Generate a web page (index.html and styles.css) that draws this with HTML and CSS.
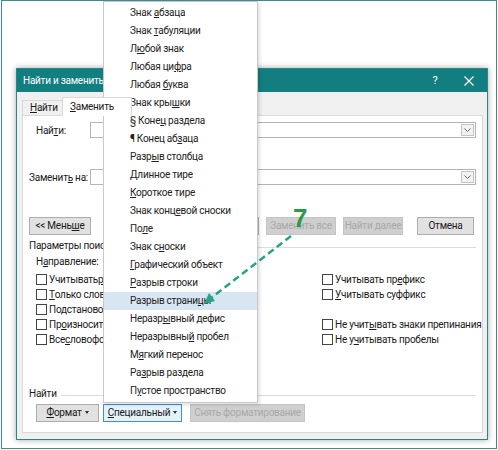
FILE: index.html
```html
<!DOCTYPE html>
<html lang="ru">
<head>
<meta charset="utf-8">
<title>Найти и заменить</title>
<link rel="stylesheet" href="styles.css">
</head>
<body>
<div class="screen">
  <div class="frame"></div>

  <div class="dialog">
    <div class="titlebar">
      <span class="title">Найти и заменить</span>
      <span class="help">?</span>
      <span class="close"><svg width="10" height="10" viewBox="0 0 10 10"><path d="M0.5 0.5 L9.5 9.5 M9.5 0.5 L0.5 9.5" stroke="#fff" stroke-width="1.2" fill="none"/></svg></span>
    </div>
    <div class="tabs">
      <div class="tab"><u>Н</u>айти</div>
      <div class="tab active"><u>З</u>аменить</div>
    </div>
    <div class="panel">
      <div class="field field-find">
        <span class="flabel">Най<u>т</u>и:</span>
        <div class="combo"><span class="drop"><svg width="7" height="4" viewBox="0 0 7 4"><path d="M0.5 0.5 L3.5 3.5 L6.5 0.5" stroke="#666" stroke-width="1" fill="none"/></svg></span></div>
      </div>
      <div class="field field-replace">
        <span class="flabel">Заменит<u>ь</u> на:</span>
        <div class="combo"><span class="drop"><svg width="7" height="4" viewBox="0 0 7 4"><path d="M0.5 0.5 L3.5 3.5 L6.5 0.5" stroke="#666" stroke-width="1" fill="none"/></svg></span></div>
      </div>
      <div class="btnrow">
        <button class="btn btn-less">&lt;&lt; Мень<u>ш</u>е</button>
        <div class="btngroup">
          <button class="btn btn-replace">Заменить</button>
          <button class="btn btn-dis btn-all">Заменить все</button>
          <button class="btn btn-dis btn-next">Найти далее</button>
          <button class="btn btn-cancel">Отмена</button>
        </div>
      </div>
      <div class="group"><span>Параметры поиска</span><span class="rule"></span></div>
      <div class="dir">Н<u>а</u>правление:</div>
      <div class="opts">
        <div class="col">
          <div class="opt"><span class="cb"></span>Учитывать <u>р</u>егистр</div>
          <div class="opt"><span class="cb"></span><u>Т</u>олько слово целиком</div>
          <div class="opt"><span class="cb"></span>Подстановочные знаки</div>
          <div class="opt"><span class="cb"></span>Пр<u>о</u>износится как</div>
          <div class="opt"><span class="cb"></span>Все <u>с</u>ловоформы</div>
        </div>
        <div class="col">
          <div class="opt"><span class="cb"></span>Учитывать пр<u>е</u>фикс</div>
          <div class="opt"><span class="cb"></span><u>У</u>читывать суффикс</div>
          <div class="opt"></div>
          <div class="opt"><span class="cb"></span>Не учит<u>ы</u>вать знаки препинания</div>
          <div class="opt"><span class="cb"></span>Не у<u>ч</u>итывать пробелы</div>
        </div>
      </div>
      <div class="group group-find"><span>Найти</span><span class="rule"></span></div>
      <div class="btnrow2">
        <button class="btn btn-format"><u>Ф</u>ормат<span class="tri"></span></button>
        <button class="btn btn-special"><u>С</u>пециальный<span class="tri"></span></button>
        <button class="btn btn-dis btn-clear">Снять форматирование</button>
      </div>
    </div>
  </div>

  <div class="menu">
    <div class="mi">Знак <u>а</u>бзаца</div>
    <div class="mi">Знак <u>т</u>абуляции</div>
    <div class="mi">Л<u>ю</u>бой знак</div>
    <div class="mi">Любая ци<u>ф</u>ра</div>
    <div class="mi">Любая <u>б</u>уква</div>
    <div class="mi">Знак кры<u>ш</u>ки</div>
    <div class="mi">§ Коне<u>ц</u> раздела</div>
    <div class="mi">¶ Конец аб<u>з</u>аца</div>
    <div class="mi">Разр<u>ы</u>в столбца</div>
    <div class="mi"><u>Д</u>линное тире</div>
    <div class="mi"><u>К</u>ороткое тире</div>
    <div class="mi">Знак конц<u>е</u>вой сноски</div>
    <div class="mi">По<u>л</u>е</div>
    <div class="mi">Знак с<u>н</u>оски</div>
    <div class="mi"><u>Г</u>рафический объект</div>
    <div class="mi"><u>Р</u>азрыв строки</div>
    <div class="mi mi-hl">Разрыв страни<u>ц</u>ы</div>
    <div class="mi">Неразр<u>ы</u>вный дефис</div>
    <div class="mi">Неразрывны<u>й</u> пробел</div>
    <div class="mi">М<u>я</u>гкий перенос</div>
    <div class="mi">Ра<u>з</u>рыв раздела</div>
    <div class="mi">П<u>у</u>стое пространство</div>
  </div>

  <div class="step">7</div>
  <svg class="arrow" width="498" height="450" viewBox="0 0 498 450">
    <line x1="291" y1="236" x2="211" y2="298" stroke="#27a386" stroke-width="2.5" stroke-dasharray="7 4"/>
    <polygon points="204,304 215,301 209,293" fill="#27a386"/>
  </svg>
</div>
</body>
</html>
```

FILE: styles.css
```css
* { box-sizing: border-box; }

body {
  margin: 0;
  font-family: Roboto, "Noto Sans", sans-serif;
  font-size: 10px;
  letter-spacing: -0.25px;
  color: #1a1a1a;
}

u { text-decoration: underline; text-underline-offset: 1px; text-decoration-thickness: 1px; }

.screen {
  position: relative;
  width: 498px;
  height: 450px;
  overflow: hidden;
  background: #fff;
  white-space: nowrap;
}

.frame {
  position: absolute;
  top: 0; left: 1px; right: 1px; bottom: 1px;
  border: 1px solid #3f8c8c;
  pointer-events: none;
}

/* dialog window */
.dialog {
  position: absolute;
  left: 16px;
  top: 68px;
  width: 472px;
  height: 372px;
  border: 1px solid #2b8787;
  background: #f0f0f0;
  box-shadow: 0 0 6px rgba(0, 0, 0, 0.35);
  display: flex;
  flex-direction: column;
}

.titlebar {
  height: 23px;
  flex: none;
  background: #137e80;
  color: #fff;
  display: flex;
  align-items: center;
  padding-left: 6px;
  font-size: 10px;
}
.title { flex: 1; }
.help { width: 32px; text-align: center; font-size: 11px; }
.close { width: 36px; display: flex; justify-content: center; align-items: center; }

.tabs {
  height: 23px;
  flex: none;
  display: flex;
  align-items: flex-end;
  padding-left: 5px;
}
.tab {
  height: 15px;
  width: 41px;
  padding-left: 7px;
  border: 1px solid #d9d9d9;
  border-bottom: none;
  background: #f0f0f0;
  line-height: 14px;
}
.tab.active {
  height: 19px;
  width: 70px;
  background: #fff;
  margin-bottom: -1px;
  margin-left: -1px;
  position: relative;
  z-index: 1;
  line-height: 18px;
}

.panel {
  flex: 1;
  margin: 0 4px 6px 5px;
  border: 1px solid #d9d9d9;
  background: #fff;
  display: flex;
  flex-direction: column;
  padding-right: 6px;
}

.field {
  display: grid;
  grid-template-columns: 67px 1fr;
  align-items: center;
  height: 16px;
}
.field-find { margin-top: 6px; }
.field-find .flabel { padding-left: 13px; }
.field-replace { margin-top: 31px; }
.field-replace .flabel { padding-left: 6px; }

.combo {
  height: 16px;
  border: 1px solid #b4b4b4;
  background: #fff;
  display: flex;
  justify-content: flex-end;
  align-items: center;
  padding-right: 1px;
}
.drop {
  width: 13px;
  height: 12px;
  border: 1px solid #c4c4c4;
  background: #f2f2f2;
  display: flex;
  align-items: center;
  justify-content: center;
}

.btn {
  font: inherit;
  letter-spacing: inherit;
  white-space: nowrap;
  height: 18px;
  padding: 0;
  border: 1px solid #adadad;
  background: #e1e1e1;
  color: #1a1a1a;
  text-align: center;
  line-height: 16px;
}
.btn-dis {
  background: #cfcfcf;
  border-color: #c4c4c4;
  color: #a9a9a9;
}

.btnrow {
  margin-top: 32px;
  display: flex;
  height: 18px;
}
.btn-less { margin-left: 6px; width: 62px; }
.btngroup { margin-left: auto; margin-right: 2px; display: flex; gap: 7px; }
.btn-replace { width: 69px; }
.btn-all { width: 70px; }
.btn-next { width: 60px; }
.btn-cancel { width: 57px; margin-left: 7px; }

.group {
  display: flex;
  align-items: center;
  height: 14px;
  margin-top: 3px;
  padding-left: 6px;
}
.group .rule {
  flex: 1;
  height: 1px;
  background: #dcdcdc;
  margin-left: 4px;
  margin-top: 4px;
}

.dir {
  height: 14px;
  line-height: 14px;
  margin-top: 3px;
  padding-left: 13px;
}

.opts {
  margin-top: 3px;
  display: grid;
  grid-template-columns: 286px 1fr;
  padding-left: 13px;
}
.opt {
  height: 15px;
  display: flex;
  align-items: center;
}
.cb {
  width: 11px;
  height: 11px;
  border: 1px solid #444;
  background: #fff;
  margin-right: 2px;
  flex: none;
}

.group-find { margin-top: 39px; }

.btnrow2 {
  margin-top: 4px;
  display: flex;
  padding-left: 13px;
}
.btn-format { width: 63px; }
.btn-special {
  width: 79px;
  margin-left: 4px;
  border-color: #3c8fd8;
  background: #e5f1fb;
}
.btn-clear { width: 115px; margin-left: 8px; }
.tri {
  display: inline-block;
  width: 0;
  height: 0;
  border-left: 2.5px solid transparent;
  border-right: 2.5px solid transparent;
  border-top: 3px solid #333;
  margin-left: 3px;
  vertical-align: 2px;
}

/* dropdown menu */
.menu {
  position: absolute;
  left: 103px;
  top: 1px;
  width: 155px;
  padding: 2px 0;
  background: #fff;
  border: 1px solid #c8c8c8;
  box-shadow: 2px 2px 3px rgba(0, 0, 0, 0.12);
}
.mi {
  height: 18px;
  line-height: 18px;
  padding-left: 26px;
  color: #222;
}
.mi-hl { background: #d8e5f3; }

.step {
  position: absolute;
  left: 293px;
  top: 205px;
  font-family: "Liberation Sans", sans-serif;
  font-weight: bold;
  font-size: 26px;
  line-height: 26px;
  letter-spacing: 0;
  color: #2a9a44;
}

.arrow {
  position: absolute;
  left: 0;
  top: 0;
  pointer-events: none;
}
```
